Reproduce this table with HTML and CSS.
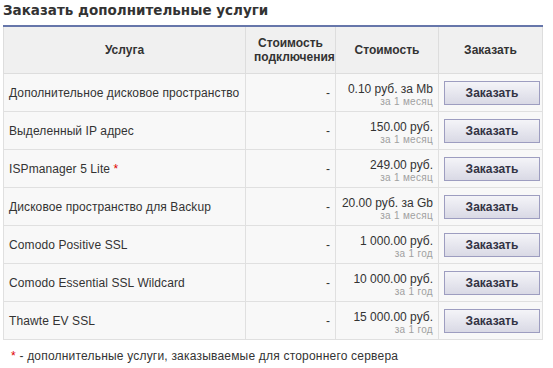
FILE: index.html
```html
<!DOCTYPE html>
<html lang="ru">
<head>
<meta charset="utf-8">
<link rel="stylesheet" href="styles.css">
</head>
<body>
<div class="page">
  <h1 class="title">Заказать дополнительные услуги</h1>
  <table class="services">
    <colgroup>
      <col class="c-name"><col class="c-setup"><col class="c-price"><col class="c-order">
    </colgroup>
    <thead>
      <tr>
        <th>Услуга</th>
        <th>Стоимость подключения</th>
        <th>Стоимость</th>
        <th>Заказать</th>
      </tr>
    </thead>
    <tbody>
      <tr>
        <td class="name">Дополнительное дисковое пространство</td>
        <td class="setup">-</td>
        <td class="price"><div class="amount">0.10 руб. за Mb</div><div class="period">за 1 месяц</div></td>
        <td class="order"><button class="btn">Заказать</button></td>
      </tr>
      <tr>
        <td class="name">Выделенный IP адрес</td>
        <td class="setup">-</td>
        <td class="price"><div class="amount">150.00 руб.</div><div class="period">за 1 месяц</div></td>
        <td class="order"><button class="btn">Заказать</button></td>
      </tr>
      <tr>
        <td class="name">ISPmanager 5 Lite <span class="star">*</span></td>
        <td class="setup">-</td>
        <td class="price"><div class="amount">249.00 руб.</div><div class="period">за 1 месяц</div></td>
        <td class="order"><button class="btn">Заказать</button></td>
      </tr>
      <tr>
        <td class="name">Дисковое пространство для Backup</td>
        <td class="setup">-</td>
        <td class="price"><div class="amount">20.00 руб. за Gb</div><div class="period">за 1 месяц</div></td>
        <td class="order"><button class="btn">Заказать</button></td>
      </tr>
      <tr>
        <td class="name">Comodo Positive SSL</td>
        <td class="setup">-</td>
        <td class="price"><div class="amount">1 000.00 руб.</div><div class="period">за 1 год</div></td>
        <td class="order"><button class="btn">Заказать</button></td>
      </tr>
      <tr>
        <td class="name">Comodo Essential SSL Wildcard</td>
        <td class="setup">-</td>
        <td class="price"><div class="amount">10 000.00 руб.</div><div class="period">за 1 год</div></td>
        <td class="order"><button class="btn">Заказать</button></td>
      </tr>
      <tr>
        <td class="name">Thawte EV SSL</td>
        <td class="setup">-</td>
        <td class="price"><div class="amount">15 000.00 руб.</div><div class="period">за 1 год</div></td>
        <td class="order"><button class="btn">Заказать</button></td>
      </tr>
    </tbody>
  </table>
  <p class="note"><span class="star">*</span> - дополнительные услуги, заказываемые для стороннего сервера</p>
</div>
</body>
</html>
```
FILE: styles.css
```css
html, body {
  margin: 0;
  padding: 0;
  background: #ffffff;
}
.page {
  padding: 3px 0 0 3px;
  font-family: "Liberation Sans", Arial, sans-serif;
  font-size: 12px;
  color: #333333;
}
.title {
  margin: 0;
  font-family: "DejaVu Sans", Verdana, sans-serif;
  font-size: 13.5px;
  font-weight: bold;
  line-height: 15px;
  color: #333333;
}
.services {
  margin-top: 7px;
  width: 539px;
  border-collapse: collapse;
  table-layout: fixed;
  border-top: 2px solid #6676aa;
}
.c-name { width: 242px; }
.c-setup { width: 90px; }
.c-price { width: 103px; }
.c-order { width: 104px; }
.services th {
  background: #f0f0f0;
  border: 1px solid #dddddd;
  border-top: none;
  height: 46px;
  padding: 0 8px;
  font-weight: bold;
  font-size: 12px;
  line-height: 14px;
  text-align: center;
  vertical-align: middle;
}
.services td {
  background: #f8f8f8;
  border: 1px solid #e0e0e0;
  height: 37px;
  padding: 0 5px;
  vertical-align: middle;
  font-size: 12px;
}
.name {
  text-align: left;
  white-space: nowrap;
  letter-spacing: 0.1px;
}
.setup { text-align: right; }
.price {
  text-align: right;
  white-space: nowrap;
}
.amount {
  padding-top: 4px;
  line-height: 14px;
}
.period {
  font-size: 10px;
  line-height: 11px;
  letter-spacing: 0.3px;
  color: #a0a0a0;
}
.order { text-align: center; }
.btn {
  width: 96px;
  height: 24px;
  margin: 0;
  padding: 0;
  border: 1px solid #9d9dc0;
  background: linear-gradient(#f4f4f8, #d9d9e5);
  font-family: "Liberation Sans", Arial, sans-serif;
  font-size: 12px;
  font-weight: bold;
  color: #333344;
  cursor: pointer;
}
.star { color: #e00000; }
.note {
  margin: 9px 0 0 8px;
  font-size: 12px;
  line-height: 14px;
  letter-spacing: 0.2px;
}
```
